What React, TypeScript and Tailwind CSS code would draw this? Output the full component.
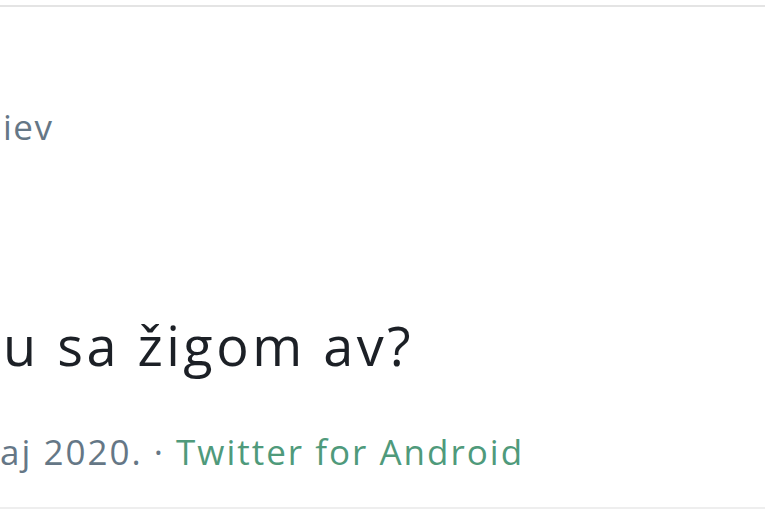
import React from "react";

const App = () => {
  return (
    <div className="w-[765px] h-[510px] bg-white overflow-hidden flex flex-col font-['Open_Sans',sans-serif]">
      <div className="mt-[5px] h-[2px] bg-[#e4e4e4]" />
      <div className="flex flex-col pl-[3px]">
        <p className="mt-[100px] text-[35px] leading-[40px] tracking-[1.5px] text-[#657786] whitespace-nowrap">iev</p>
        <p className="mt-[168px] text-[54px] leading-[60px] tracking-[3.5px] text-[#1c2026] whitespace-nowrap">
          u sa žigom av?
        </p>
        <p className="mt-[57px] -ml-[3px] text-[35px] leading-[40px] tracking-[2px] text-[#657786] whitespace-nowrap">
          aj 2020. · <span className="text-[#4f9a7b]">Twitter for Android</span>
        </p>
      </div>
      <div className="mt-auto mb-[1px] h-[2px] bg-[#eeeeee]" />
    </div>
  );
};

export default App;
